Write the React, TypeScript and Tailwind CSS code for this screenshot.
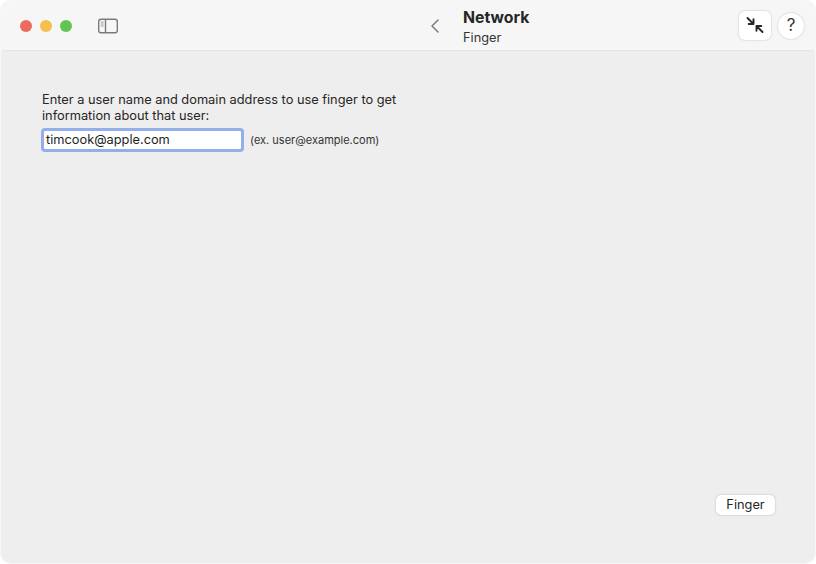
import { ChevronLeft } from 'lucide-react';

const font = { fontFamily: 'Inter, "Liberation Sans", sans-serif' };

function SidebarIcon() {
  return (
    <svg width="22" height="18" viewBox="0 0 22 18" fill="none">
      <rect x="1.7" y="2.2" width="18.6" height="13.6" rx="2.2" stroke="#7b7b7b" strokeWidth="1.4" />
      <path d="M8.5 2.5V15.5" stroke="#7b7b7b" strokeWidth="1.4" />
      <path d="M3.8 5H6.6M3.8 7H6.6M3.8 9H6.6" stroke="#9a9a9a" strokeWidth="1" />
    </svg>
  );
}

function CollapseIcon() {
  return (
    <svg width="20" height="20" viewBox="0 0 20 20" fill="none" stroke="#262626" strokeWidth="1.9" strokeLinecap="round" strokeLinejoin="round">
      <path d="M2.5 3L8.5 9M8.5 4.2V9H3.7" />
      <path d="M17.5 17L11.5 11M11.5 15.8V11H16.3" />
    </svg>
  );
}

export default function App() {
  return (
    <div className="w-[816px] h-[564px] bg-white" style={font}>
      <div className="w-full h-full flex flex-col rounded-[11px] overflow-hidden bg-[#f6f6f6] px-px pb-px">
        {/* Title bar */}
        <div className="h-[50px] shrink-0 flex items-center">
          <div className="flex items-center gap-2 pl-[19px] mt-[1px]">
            <span className="w-3 h-3 rounded-full bg-[#ec6a5e]" />
            <span className="w-3 h-3 rounded-full bg-[#f5bf4f]" />
            <span className="w-3 h-3 rounded-full bg-[#61c554]" />
          </div>
          <div className="ml-[25px] mt-[1px]">
            <SidebarIcon />
          </div>
          <div className="ml-[304px] w-[24px] flex justify-center mt-[1px]">
            <ChevronLeft size={24} strokeWidth={1.5} color="#7d7d7d" />
          </div>
          <div className="ml-[16px] flex flex-col mt-[4px]">
            <span className="text-[15.8px] leading-[20px] font-bold text-[#262626]">Network</span>
            <span className="text-[12.8px] leading-[18px] mt-[1px] text-[#333]">Finger</span>
          </div>
          <div className="ml-auto pr-[11px] flex items-center gap-[7px]">
            <div className="w-[32px] h-[29px] rounded-[6px] bg-white shadow-[0_0_2px_rgba(0,0,0,0.25)] flex items-center justify-center">
              <CollapseIcon />
            </div>
            <div className="w-[26px] h-[26px] mt-[1px] rounded-full bg-white shadow-[0_0_2px_rgba(0,0,0,0.25)] flex items-center justify-center text-[17px] text-[#333] pt-[1px]">
              ?
            </div>
          </div>
        </div>

        {/* Content */}
        <div className="flex-1 flex flex-col justify-between pl-[41px] pr-[40px] pt-[41px] pb-[48px] bg-[#eeeeee] border-t border-[#e4e4e4] rounded-b-[10px] rounded-t-[3px]">
          <div>
            <p className="w-[370px] text-[12.8px] leading-[16px] text-[#262626]">
              Enter a user name and domain address to use finger to get information about that user:
            </p>
            <div className="flex items-center mt-[4px]">
              <div className="w-[203px] h-[24px] -ml-[1px] bg-white border-[3px] border-[#92aeeb] rounded-[4px] flex items-center pl-[2px] text-[12.8px] text-[#1f1f1f]">
                timcook@apple.com
              </div>
              <span className="ml-[6px] text-[11px] text-[#333]">(ex. user@example.com)</span>
            </div>
          </div>
          <div className="flex justify-end">
            <button className="w-[59px] h-[20px] rounded-[5px] bg-white shadow-[0_0_2px_rgba(0,0,0,0.28)] text-[12.8px] text-[#262626] flex items-center justify-center">
              Finger
            </button>
          </div>
        </div>
      </div>
    </div>
  );
}
